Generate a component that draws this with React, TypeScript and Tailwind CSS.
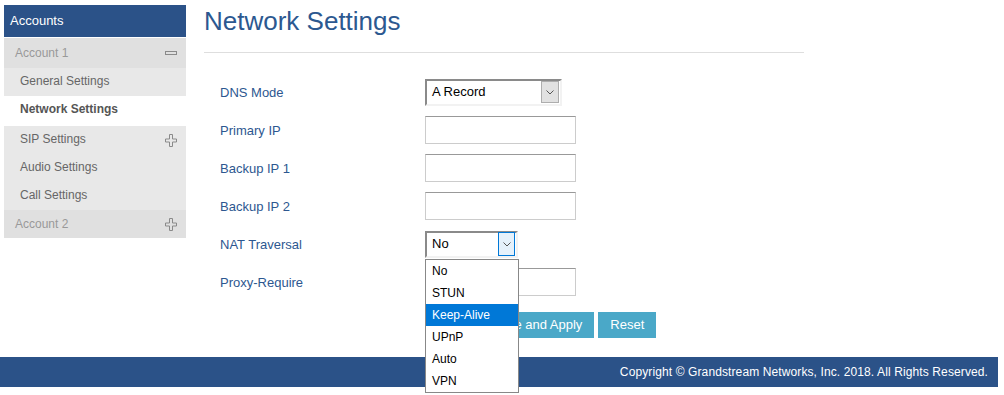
import React from 'react';

const font = "font-['Liberation_Sans',Arial,sans-serif]";

function PlusIcon() {
  return (
    <svg width="12" height="13" viewBox="0 0 12 13" className="block">
      <path
        d="M4.5 0.5h3v4.5h4v3h-4v4.5h-3v-4.5h-4v-3h4z"
        fill="none"
        stroke="#8a8a8a"
        strokeWidth="1"
      />
    </svg>
  );
}

function MinusIcon() {
  return (
    <svg width="12" height="4" viewBox="0 0 12 4" className="block">
      <rect x="0.5" y="0.5" width="11" height="3" fill="none" stroke="#8a8a8a" strokeWidth="1" />
    </svg>
  );
}

function Chevron() {
  return (
    <svg width="8" height="5" viewBox="0 0 8 5" className="block">
      <path d="M0.5 0.5L4 4L7.5 0.5" fill="none" stroke="#555" strokeWidth="1" />
    </svg>
  );
}

function Sidebar() {
  return (
    <aside className="ml-[4px] mt-[5px] w-[182px] text-[12px]">
      <div className="flex h-[32px] items-center bg-[#2b5288] pl-[6px] text-[13px] text-white">
        Accounts
      </div>
      <div className="mt-[1px] flex h-[30px] items-center justify-between bg-[#e0e0e0] pl-[11px] pr-[9px] text-[#999]">
        <span>Account 1</span>
        <MinusIcon />
      </div>
      <div className="flex h-[28px] items-center bg-[#e8e8e8] pb-[2px] pl-[16px] text-[#666]">General Settings</div>
      <div className="flex h-[30px] items-center bg-white pb-[4px] pl-[16px] font-bold text-[#555]">Network Settings</div>
      <div className="flex h-[28px] items-center justify-between bg-[#e8e8e8] pl-[16px] pr-[9px] text-[#666]">
        <span className="pb-[2px]">SIP Settings</span>
        <PlusIcon />
      </div>
      <div className="flex h-[28px] items-center bg-[#e8e8e8] pb-[2px] pl-[16px] text-[#666]">Audio Settings</div>
      <div className="flex h-[28px] items-center bg-[#e8e8e8] pb-[2px] pl-[16px] text-[#666]">Call Settings</div>
      <div className="flex h-[28px] items-center justify-between bg-[#e0e0e0] pl-[11px] pr-[9px] text-[#999]">
        <span>Account 2</span>
        <PlusIcon />
      </div>
    </aside>
  );
}

function TextBox() {
  return (
    <div className="h-[28px] w-[151px] border border-[#ccc] border-t-[#999] bg-white" />
  );
}

function Row({ label, children }: { label: string; children: React.ReactNode }) {
  return (
    <div className="flex h-[28px] items-center">
      <div className="w-[221px] pl-[16px] pt-[1px] text-[13px] text-[#2d5790]">{label}</div>
      {children}
    </div>
  );
}

const natOptions = ['No', 'STUN', 'Keep-Alive', 'UPnP', 'Auto', 'VPN'];

export default function App() {
  return (
    <div className={`relative h-[395px] w-[1004px] bg-white ${font}`}>
      <div className="flex h-[357px]">
        <Sidebar />
        <main className="ml-[18px] w-[600px]">
          <h1 className="pt-[6px] text-[26px] leading-[30px] text-[#2c5890]">Network Settings</h1>
          <div className="mt-[16px] border-t border-[#dedede]" />

          <div className="mt-[25px] flex flex-col gap-[10px]">
            <Row label="DNS Mode">
              <div className="flex h-[27px] w-[137px] items-center border-2 border-[#8a8a8a] border-b-[#f2f2f2] border-r-[#f2f2f2] bg-white pl-[5px] pr-[1px]">
                <span className="flex-1 text-[13px] text-black">A Record</span>
                <span className="flex h-[22px] w-[18px] items-center justify-center border border-[#adadad] bg-[#e1e1e1]">
                  <Chevron />
                </span>
              </div>
            </Row>
            <Row label="Primary IP">
              <TextBox />
            </Row>
            <Row label="Backup IP 1">
              <TextBox />
            </Row>
            <Row label="Backup IP 2">
              <TextBox />
            </Row>
            <Row label="NAT Traversal">
              <div className="relative">
                <div className="flex h-[27px] w-[93px] items-center border-2 border-[#8a8a8a] border-b-[#f2f2f2] border-r-[#f2f2f2] bg-white pl-[5px] pr-[1px]">
                  <span className="flex-1 text-[13px] text-black">No</span>
                  <span className="flex h-[24px] w-[17px] items-center justify-center border border-[#0078d7] bg-[#e5f1fb]">
                    <Chevron />
                  </span>
                </div>
                <ul className="absolute left-0 top-[28px] z-10 w-[94px] border border-[#888] bg-white text-[12px] text-black">
                  {natOptions.map((o) => (
                    <li
                      key={o}
                      className={`flex h-[22px] items-center pl-[6px] ${
                        o === 'Keep-Alive' ? 'bg-[#0078d7] text-white' : ''
                      }`}
                    >
                      {o}
                    </li>
                  ))}
                </ul>
              </div>
            </Row>
            <Row label="Proxy-Require">
              <TextBox />
            </Row>
          </div>

          <div className="ml-[276px] mt-[16px] flex gap-[4px] text-[13px] text-white">
            <button type="button" className="h-[26px] bg-[#4aa8c8] px-[12px]">
              Save and Apply
            </button>
            <button type="button" className="h-[26px] bg-[#4aa8c8] px-[12px]">
              Reset
            </button>
          </div>
        </main>
      </div>
      <footer className="flex h-[30px] w-[998px] items-center justify-end bg-[#2b5288] pr-[10px] text-[12px] tracking-[0.11px] text-white">
        Copyright © Grandstream Networks, Inc. 2018. All Rights Reserved.
      </footer>
    </div>
  );
}
